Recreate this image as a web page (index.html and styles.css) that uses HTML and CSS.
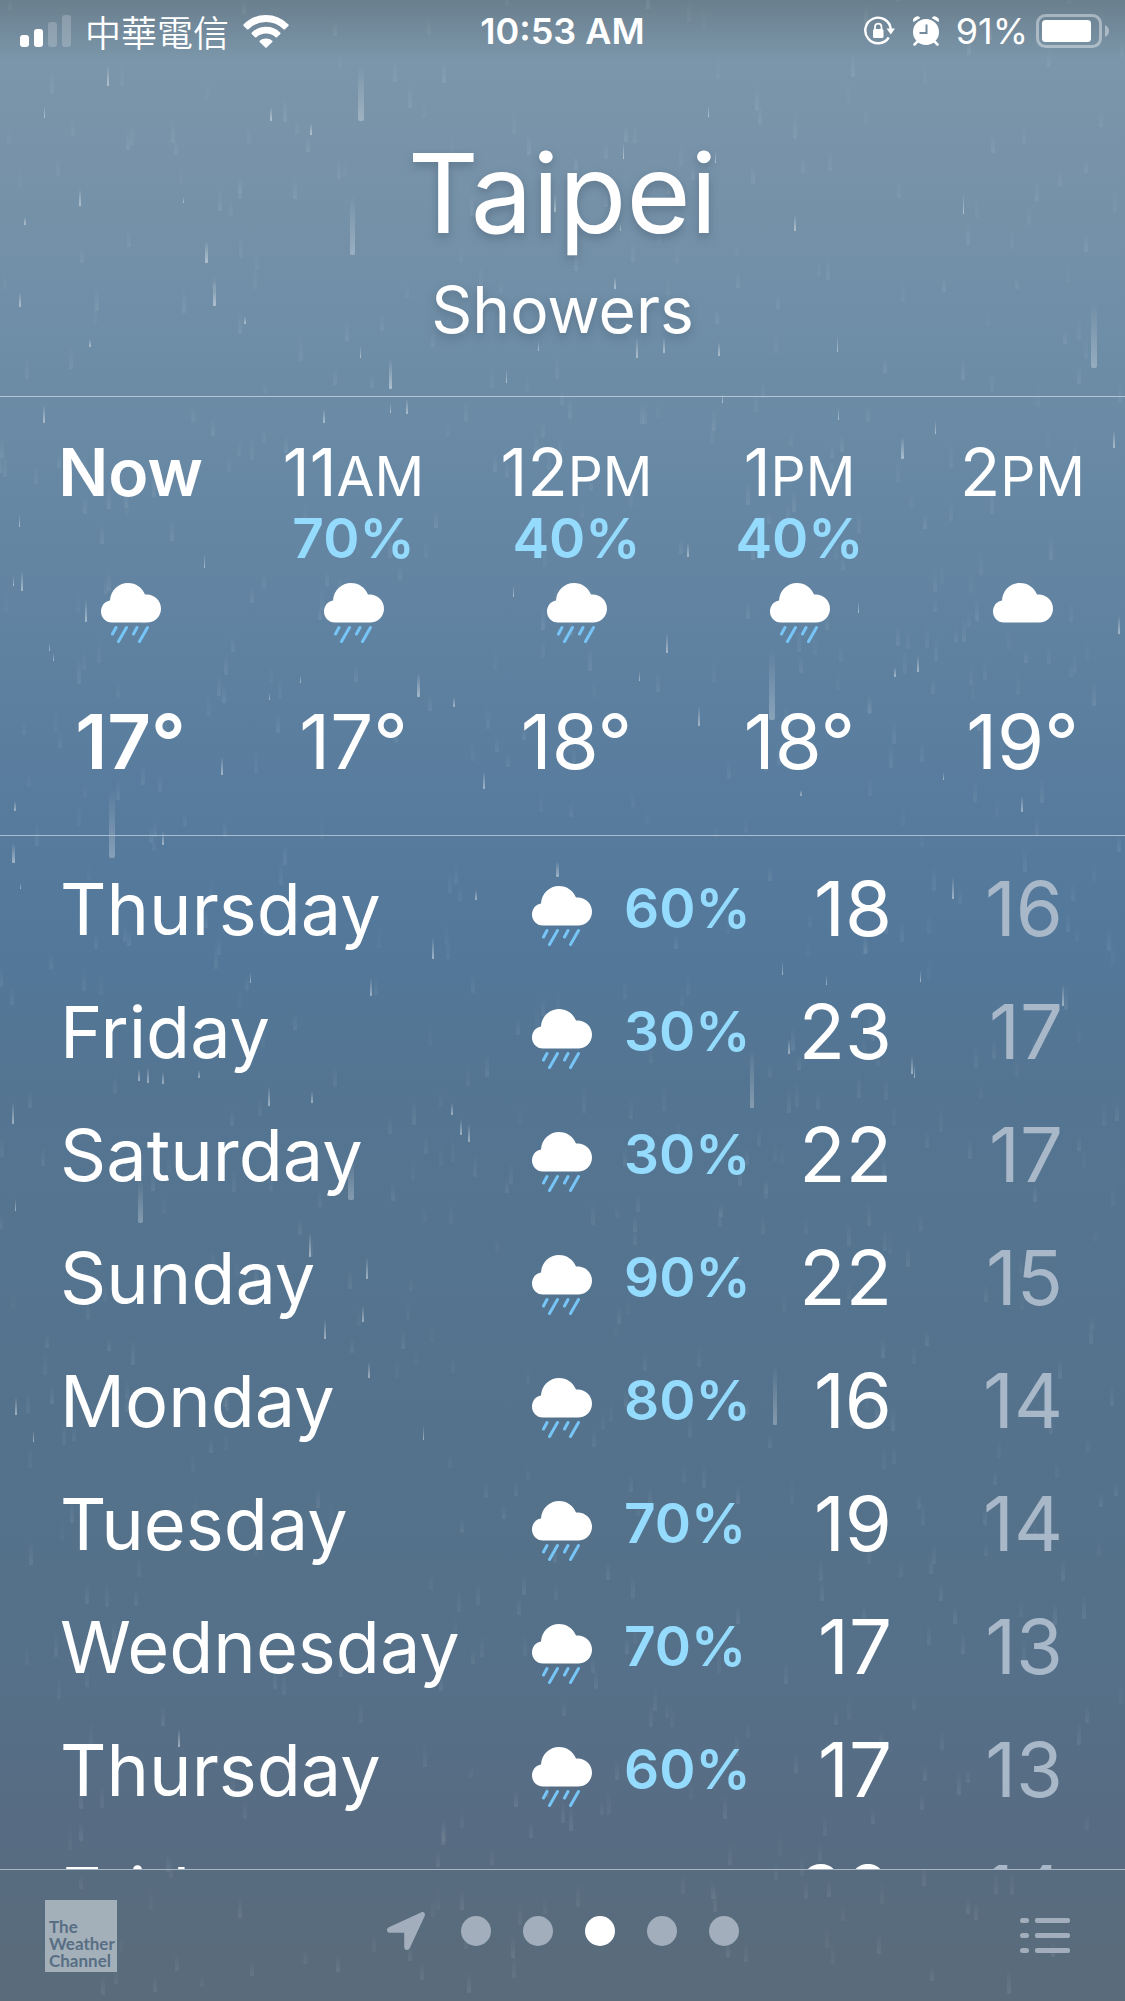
FILE: index.html
```
<!DOCTYPE html>
<html lang="en">
<head>
    <meta charset="UTF-8">
    <meta name="viewport" content="width=device-width, initial-scale=1.0">
    <title>Weather</title>
    <link rel="stylesheet" href="styles.css">
</head>
<body>
<!-- shared icons -->
<svg class="sprite" aria-hidden="true">
    <symbol id="cloud" viewBox="0 0 60 60">
        <path fill="#fff" d="M11 39.500C4.500 39.500 0 34.500 0 28.500C0 22.800 4 18 9 17.500C9.500 7.500 17.500 0 27 0C35 0 41 4.500 44 11.500C53 10.500 60 17.500 60 25.500C60 33.500 54 39.500 46 39.500Z"/>
    </symbol>
    <symbol id="rain" viewBox="0 0 60 60">
        <use href="#cloud" width="60" height="60"/>
        <path stroke="#76c5f6" stroke-width="3" stroke-linecap="round" fill="none" d="M15 44.500L11.500 51M25.500 44.500L17.500 58.500M36 44.500L32.500 51M46.500 44.500L38.500 58.500"/>
    </symbol>
</svg>

<div class="app">
    <svg class="rain-layer" id="rainLayer" aria-hidden="true"></svg>

    <div class="status-bar">
        <div class="status-left">
            <svg width="51" height="32" viewBox="0 0 51 32" fill="#fff">
                <rect y="20" width="9" height="12" rx="3"/>
                <rect x="14" y="14" width="9" height="18" rx="3"/>
                <rect x="28" y="7" width="9" height="25" rx="3" opacity=".2"/>
                <rect x="42" width="9" height="32" rx="3" opacity=".2"/>
            </svg>
            <span class="carrier" lang="zh-Hant">中華電信</span>
            <svg width="46" height="33" viewBox="0 0 46 33" fill="#fff">
                <path d="M0.500 9.500Q10 0 23 0T45.500 9.500Q46 10.300 45.300 11L42 14.200Q41.300 14.800 40.500 14.200Q33 7 23 7T5.500 14.200Q4.700 14.800 4 14.200L0.700 11Q0 10.300 0.500 9.500Z"/>
                <path d="M8.700 17.700Q14.500 11.800 23 11.800T37.300 17.700Q37.900 18.400 37.300 19L34 22.200Q33.300 22.800 32.600 22.200Q28.500 18.500 23 18.500T13.400 22.200Q12.700 22.800 12 22.200L8.700 19Q8.100 18.400 8.700 17.700Z"/>
                <path d="M16.700 25.700Q19 23.500 23 23.500T29.300 25.700Q29.900 26.300 29.300 27L23.700 32.500Q23 33.100 22.300 32.500L16.700 27Q16.100 26.300 16.700 25.700Z"/>
            </svg>
        </div>
        <div class="status-time">10:53 AM</div>
        <div class="status-right">
            <svg class="lock" width="32" height="30" viewBox="0 0 32 30" fill="none" stroke="#fff" stroke-width="2.400">
                <path d="M24.800 21.500A12.800 12.800 0 1 1 26.800 13"/>
                <path d="M22.500 12.500H31L26.800 18.500Z" fill="#fff" stroke="none"/>
                <rect x="9" y="13" width="10.500" height="9" rx="1.500" fill="#fff" stroke="none"/>
                <path d="M11 13.500V11Q11 7.700 14.200 7.700T17.500 11V13.500" stroke-width="1.800"/>
            </svg>
            <svg class="alarm" width="28" height="30" viewBox="0 0 28 30">
                <g fill="none" stroke="#fff" stroke-width="2.500" stroke-linecap="round">
                    <path d="M6 25L2.500 28.500M22 25L25.500 28.500"/>
                </g>
                <circle cx="14" cy="16" r="13" fill="#fff"/>
                <path fill="#fff" d="M1.500 6Q0 3 3 1.200Q6.500-.800 8.300 2ZM26.500 6Q28 3 25 1.200Q21.500-.800 19.700 2Z"/>
                <path d="M14.500 8.500V17H7.500" fill="none" stroke="#728a9d" stroke-width="2"/>
            </svg>
            <span class="battery-text">91%</span>
            <svg width="74" height="34" viewBox="0 0 74 34" fill="#fff">
                <rect x="1.500" y="1.500" width="63" height="31" rx="8" fill="none" stroke="#fff" stroke-width="3" opacity=".4"/>
                <rect x="6" y="6" width="49" height="22" rx="3.500"/>
                <path d="M69 11Q73 13 73 17T69 23Z" opacity=".4"/>
            </svg>
        </div>
    </div>

    <header class="header">
        <h1>Taipei</h1>
        <p>Showers</p>
    </header>

    <section class="hourly">
        <div class="hour now">
            <div class="time">Now</div>
            <div class="chance"></div>
            <svg class="icon"><use href="#rain"/></svg>
            <div class="temp">17°</div>
        </div>
        <div class="hour">
            <div class="time">11<small>AM</small></div>
            <div class="chance">70%</div>
            <svg class="icon"><use href="#rain"/></svg>
            <div class="temp">17°</div>
        </div>
        <div class="hour">
            <div class="time">12<small>PM</small></div>
            <div class="chance">40%</div>
            <svg class="icon"><use href="#rain"/></svg>
            <div class="temp">18°</div>
        </div>
        <div class="hour">
            <div class="time">1<small>PM</small></div>
            <div class="chance">40%</div>
            <svg class="icon"><use href="#rain"/></svg>
            <div class="temp">18°</div>
        </div>
        <div class="hour">
            <div class="time">2<small>PM</small></div>
            <div class="chance"></div>
            <svg class="icon"><use href="#cloud"/></svg>
            <div class="temp">19°</div>
        </div>
    </section>

    <main class="daily">
        <table>
            <tr><th scope="row">Thursday</th><td class="sky"><svg class="icon"><use href="#rain"/></svg></td><td class="chance">60%</td><td class="high">18</td><td class="low">16</td></tr>
            <tr><th scope="row">Friday</th><td class="sky"><svg class="icon"><use href="#rain"/></svg></td><td class="chance">30%</td><td class="high">23</td><td class="low">17</td></tr>
            <tr><th scope="row">Saturday</th><td class="sky"><svg class="icon"><use href="#rain"/></svg></td><td class="chance">30%</td><td class="high">22</td><td class="low">17</td></tr>
            <tr><th scope="row">Sunday</th><td class="sky"><svg class="icon"><use href="#rain"/></svg></td><td class="chance">90%</td><td class="high">22</td><td class="low">15</td></tr>
            <tr><th scope="row">Monday</th><td class="sky"><svg class="icon"><use href="#rain"/></svg></td><td class="chance">80%</td><td class="high">16</td><td class="low">14</td></tr>
            <tr><th scope="row">Tuesday</th><td class="sky"><svg class="icon"><use href="#rain"/></svg></td><td class="chance">70%</td><td class="high">19</td><td class="low">14</td></tr>
            <tr><th scope="row">Wednesday</th><td class="sky"><svg class="icon"><use href="#rain"/></svg></td><td class="chance">70%</td><td class="high">17</td><td class="low">13</td></tr>
            <tr><th scope="row">Thursday</th><td class="sky"><svg class="icon"><use href="#rain"/></svg></td><td class="chance">60%</td><td class="high">17</td><td class="low">13</td></tr>
            <tr><th scope="row">Friday</th><td class="sky"></td><td class="chance"></td><td class="high">20</td><td class="low">14</td></tr>
        </table>
    </main>

    <footer class="footer">
        <a class="logo" href="#">The<br>Weather<br>Channel</a>
        <nav class="pages">
            <button class="here" aria-label="Current location">
                <svg width="38" height="38" viewBox="0 0 38 38"><path fill="#a2aebb" d="M34 .400C37 -.800 38.700 1.500 37.600 4.200L22.800 36C21.500 39 17.200 38.600 17.200 35V20.800H3C-.600 20.800 -1 16.500 1.800 15.200Z"/></svg>
            </button>
            <button class="dot" aria-label="Page 1"></button>
            <button class="dot" aria-label="Page 2"></button>
            <button class="dot active" aria-label="Page 3"></button>
            <button class="dot" aria-label="Page 4"></button>
            <button class="dot" aria-label="Page 5"></button>
        </nav>
        <button class="list" aria-label="City list">
            <svg width="50" height="36" viewBox="0 0 50 36" fill="#a2aebb">
                <rect width="9" height="5" rx="2.500"/><rect x="15" width="35" height="5" rx="2"/>
                <rect y="15" width="9" height="5" rx="2.500"/><rect x="15" y="15" width="35" height="5" rx="2"/>
                <rect y="30" width="9" height="5" rx="2.500"/><rect x="15" y="30" width="35" height="5" rx="2"/>
            </svg>
        </button>
    </footer>
</div>
<script src="rain.js"></script>
</body>
</html>
```
FILE: styles.css
```
* {
    box-sizing: border-box;
}
body {
    margin: 0;
    font-family: Inter, "Noto Sans CJK TC", sans-serif;
    color: #fff;
}
button {
    padding: 0;
    border: none;
    background: none;
    cursor: pointer;
}
svg {
    display: block;
    flex: none;
}
.sprite {
    position: absolute;
    width: 0;
    height: 0;
}
.app {
    position: relative;
    display: flex;
    flex-direction: column;
    height: 100vh;
    overflow: hidden;
    background: linear-gradient(#6a7f8e 0%, #7b96aa 3%, #7893a9 8%, #6c8ca6 19%, #577b9d 41%, #53789a 47%, #547592 54%, #557088 84%, #576c83 91%, #5a6c7a 100%);
}
.rain-layer {
    position: absolute;
    inset: 0;
    width: 100%;
    height: 100%;
}
.status-bar, .header, .hourly, .daily, .footer {
    position: relative;
}

/* status bar */
.status-bar {
    display: grid;
    grid-template-columns: 1fr auto 1fr;
    align-items: center;
    height: 60px;
    padding: 2px 15px 0;
    font-size: 36px;
    line-height: 58px;
}
.status-left, .status-right {
    display: flex;
    align-items: center;
}
.status-left {
    gap: 14px;
    padding-left: 5px;
}
.status-right {
    justify-content: flex-end;
    gap: 8px;
}
.lock, .alarm {
    margin-right: 8px;
}
.carrier {
    font-family: "Noto Sans CJK TC", sans-serif;
    font-weight: 350;
    line-height: 56px;
}
.status-time {
    font-size: 36px;
    font-weight: 600;
}
.battery-text {
    font-size: 36px;
}

/* city */
.header {
    height: 336px;
    padding-top: 60px;
    text-align: center;
    text-shadow: 0 4px 10px rgba(60, 80, 100, 0.4);
}
.header h1 {
    margin: 0;
    font-size: 110px;
    font-weight: 400;
    line-height: 146px;
}
.header p {
    margin: 0;
    font-size: 64px;
    line-height: 88px;
}

/* hours */
.hourly {
    display: flex;
    height: 440px;
    padding: 40px 19px 0;
    border-top: 1px solid #b5c4d1;
    border-bottom: 1px solid #abbdce;
    overflow: hidden;
}
.hour {
    display: flex;
    flex: none;
    flex-direction: column;
    align-items: center;
    width: 223px;
}
.time {
    font-size: 66px;
    line-height: 70px;
}
.time small {
    font-size: 55px;
    line-height: 55px;
}
.chance {
    font-size: 55px;
    font-weight: 600;
    color: #94dbfd;
}
.hour .chance {
    height: 60px;
    line-height: 62px;
}
.icon {
    width: 60px;
    height: 60px;
}
.hour .icon {
    margin: 16px 0 58px;
}
.temp {
    font-size: 76px;
    line-height: 80px;
}
.now .time, .now .temp {
    font-weight: 600;
}

/* days */
.daily {
    flex: 1;
    min-height: 0;
    padding-top: 11px;
    overflow: hidden;
}
.daily table {
    width: 100%;
    border-collapse: collapse;
    table-layout: fixed;
}
.daily tr {
    height: 123px;
}
.daily th, .daily td {
    padding: 0;
    font-size: 76px;
    line-height: 123px;
}
.daily th {
    width: 532px;
    padding-left: 60px;
    font-size: 72px;
    font-weight: 400;
    text-align: left;
}
.daily .sky {
    width: 92px;
    padding-top: 14px;
}
.daily .chance {
    width: 156px;
    font-size: 55px;
}
.daily .high, .daily .low {
    text-align: right;
}
.daily .high {
    width: 112px;
}
.daily .low {
    padding-right: 62px;
    color: #a9b8c8;
}

/* bottom bar */
.footer {
    display: grid;
    grid-template-columns: 1fr auto 1fr;
    align-items: start;
    height: 132px;
    padding: 30px 45px 0;
    border-top: 1px solid #a8b4c1;
}
.logo {
    width: 72px;
    height: 72px;
    padding: 18px 0 0 4px;
    background: #a3b0ba;
    color: #586e83;
    font-family: Lato, sans-serif;
    font-size: 17px;
    font-weight: 700;
    line-height: 17px;
    text-decoration: none;
}
.pages {
    display: flex;
    align-items: center;
    gap: 32px;
    padding-top: 12px;
}
.here {
    margin-right: 4px;
}
.dot {
    width: 30px;
    height: 30px;
    border-radius: 50%;
    background: #a2aebb;
}
.dot.active {
    background: #fff;
}
.list {
    justify-self: end;
    padding: 18px 10px 0 0;
}
```
FILE: rain.js
```
// bright drops: center x, bottom y, length, width
const drops = [
    [361, 121, 55, 6], [353, 255, 60, 5], [108, 86, 20, 2], [45, 118, 12, 1], [311, 135, 12, 2],
    [80, 206, 17, 2], [25, 225, 8, 2], [207, 263, 22, 3], [215, 306, 25, 3], [20, 307, 15, 2],
    [245, 324, 8, 2], [90, 347, 8, 2], [361, 358, 12, 1], [271, 121, 14, 2], [184, 203, 6, 1],
    [709, 117, 12, 1], [624, 159, 16, 1], [716, 163, 12, 1], [555, 212, 18, 2], [621, 231, 8, 1],
    [576, 254, 12, 1], [615, 289, 12, 2], [539, 351, 10, 1], [637, 358, 20, 2], [664, 353, 16, 2],
    [719, 356, 14, 2], [391, 389, 30, 3], [507, 383, 14, 1], [1094, 368, 65, 6], [964, 214, 20, 1],
    [795, 231, 16, 2], [838, 352, 16, 1], [44, 423, 18, 2], [324, 423, 14, 2], [391, 413, 10, 1],
    [407, 414, 15, 2], [20, 527, 12, 1], [205, 568, 14, 1], [14, 586, 10, 1], [22, 591, 20, 2],
    [86, 622, 22, 2], [50, 651, 8, 1], [54, 661, 8, 1], [301, 683, 8, 1], [419, 697, 24, 3],
    [270, 700, 7, 1], [454, 707, 10, 2], [222, 775, 18, 2], [15, 811, 10, 2], [484, 789, 18, 2],
    [163, 845, 14, 2], [514, 597, 12, 1], [112, 858, 70, 6], [723, 403, 10, 1], [839, 420, 12, 1],
    [936, 434, 14, 1], [903, 459, 22, 3], [688, 557, 14, 2], [859, 613, 12, 1], [667, 653, 20, 2],
    [918, 672, 16, 2], [895, 677, 10, 2], [640, 681, 10, 1], [1114, 448, 18, 2], [1119, 634, 18, 2],
    [772, 720, 70, 6], [699, 726, 20, 2], [944, 780, 8, 1], [1022, 812, 16, 2], [801, 796, 6, 2],
    [14, 863, 20, 3], [21, 889, 6, 1], [433, 959, 22, 2], [371, 996, 18, 2], [251, 983, 11, 1],
    [163, 1084, 12, 2], [148, 1083, 16, 2], [139, 1081, 12, 2], [199, 1078, 8, 2], [476, 900, 10, 2],
    [558, 877, 16, 3], [953, 899, 22, 2], [783, 975, 14, 1], [921, 982, 12, 1], [827, 985, 10, 1],
    [1063, 1006, 22, 2], [789, 1054, 15, 2], [912, 1074, 18, 2], [915, 1078, 14, 1], [752, 1108, 60, 4],
    [13, 1124, 22, 2], [269, 1106, 20, 2], [312, 1103, 12, 2], [452, 1115, 12, 2], [461, 1135, 16, 2],
    [469, 1142, 18, 2], [16, 1211, 12, 1], [310, 1257, 24, 2], [367, 1279, 22, 2], [363, 1322, 16, 2],
    [325, 1339, 20, 2], [369, 1378, 16, 2], [34, 1442, 12, 1], [424, 1440, 14, 1], [16, 1415, 18, 2],
    [141, 1223, 44, 5], [351, 1200, 44, 6], [775, 1425, 60, 4], [179, 1747, 18, 2]
];

const layer = document.getElementById('rainLayer');
let markup = '<defs><linearGradient id="drop" x2="0" y2="1"><stop stop-color="#fff" stop-opacity="0"/><stop offset="1" stop-color="#fff"/></linearGradient></defs>';

function addDrop(x, bottom, length, width, opacity) {
    markup += `<rect x="${x - Math.ceil(width / 2)}" y="${bottom - length}" width="${width}" height="${length}" rx="${width / 3}" fill="url(#drop)" opacity="${opacity}"/>`;
}

// faint drops in the distance, same pattern on every load
let seed = 17;
function rand() {
    seed = (seed * 16807) % 2147483647;
    return seed / 2147483647;
}
for (let i = 0; i < 750; i++) {
    addDrop(Math.round(rand() * 1125), Math.round(rand() * 2001), 14 + Math.round(rand() * 12), 4, 0.03 + rand() * 0.05);
}

drops.forEach(d => addDrop(d[0], d[1], d[2], d[3], d[3] > 3 ? 0.28 : 0.45));
layer.innerHTML = markup;
```
